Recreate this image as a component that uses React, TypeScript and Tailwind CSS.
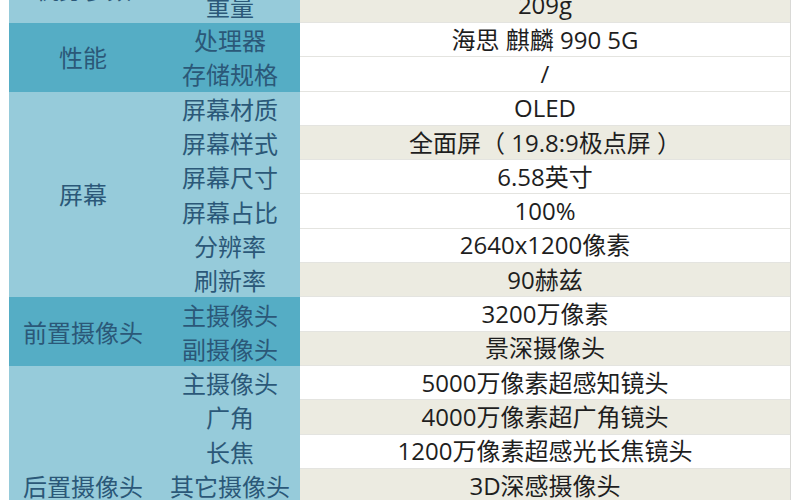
import React from "react";

type Row = { k: string; v: string; beige?: boolean };
type Group = { label: string; dark?: boolean; rows: Row[] };

const groups: Group[] = [
  {
    label: "机身参数",
    rows: [
      { k: "尺寸", v: "158.2x73.1x8.4mm" },
      { k: "重量", v: "209g", beige: true },
    ],
  },
  {
    label: "性能",
    dark: true,
    rows: [
      { k: "处理器", v: "海思 麒麟 990 5G" },
      { k: "存储规格", v: "/" },
    ],
  },
  {
    label: "屏幕",
    rows: [
      { k: "屏幕材质", v: "OLED" },
      { k: "屏幕样式", v: "全面屏（ 19.8:9极点屏 ）", beige: true },
      { k: "屏幕尺寸", v: "6.58英寸" },
      { k: "屏幕占比", v: "100%" },
      { k: "分辨率", v: "2640x1200像素" },
      { k: "刷新率", v: "90赫兹", beige: true },
    ],
  },
  {
    label: "前置摄像头",
    dark: true,
    rows: [
      { k: "主摄像头", v: "3200万像素" },
      { k: "副摄像头", v: "景深摄像头", beige: true },
    ],
  },
  {
    label: "后置摄像头",
    rows: [
      { k: "主摄像头", v: "5000万像素超感知镜头" },
      { k: "广角", v: "4000万像素超广角镜头", beige: true },
      { k: "长焦", v: "1200万像素超感光长焦镜头" },
      { k: "其它摄像头", v: "3D深感摄像头", beige: true },
      { k: "光圈", v: "f/1.6" },
      { k: "变焦", v: "5倍光学变焦", beige: true },
      { k: "闪光灯", v: "LED补光灯" },
    ],
  },
];

export default function App() {
  return (
    <div
      className="w-[800px] h-[500px] overflow-hidden bg-white"
      style={{ fontFamily: '"Noto Sans CJK SC", "Noto Sans", sans-serif' }}
    >
      <div className="mt-[-45.6px] ml-[9px] w-[782px] flex flex-col border-r border-[#d9d9d6]">
        {groups.map((g, gi) => {
          const bg = g.dark ? "bg-[#55adc5]" : "bg-[#96cbda]";
          return (
            <div key={gi} className="flex">
              <div
                className={`w-[148px] shrink-0 flex items-center justify-center text-[24px] leading-none text-[#2b5878] ${bg}`}
              >
                {g.label}
              </div>
              <div className="flex-1 flex flex-col">
                {g.rows.map((r, ri) => (
                  <div key={ri} className="flex h-[34.3px]">
                    <div
                      className={`w-[143px] shrink-0 pl-[3px] flex items-center justify-center text-[24px] leading-none text-[#2b5878] ${bg}`}
                    >
                      {r.k}
                    </div>
                    <div
                      className={`flex-1 flex items-center justify-center text-[24px] leading-none text-[#1e1e1e] font-['Open_Sans','Noto_Sans_CJK_SC',sans-serif] border-b border-[#e4e4e0] ${
                        r.beige ? "bg-[#ecebe1]" : "bg-white"
                      }`}
                    >
                      {r.v}
                    </div>
                  </div>
                ))}
              </div>
            </div>
          );
        })}
      </div>
    </div>
  );
}
